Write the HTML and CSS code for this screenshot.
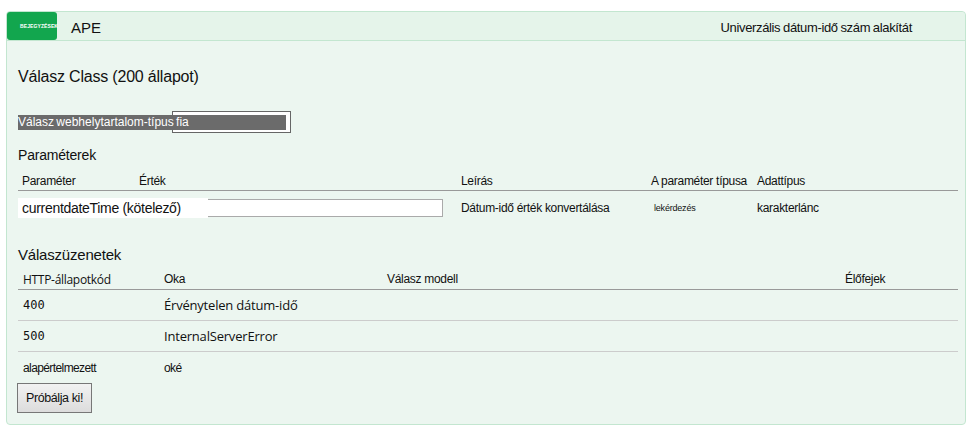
FILE: index.html
```
<!DOCTYPE html>
<html lang="hu">
<head>
<meta charset="utf-8">
<link rel="stylesheet" href="styles.css">
</head>
<body>
<div class="panel">
  <div class="head">
    <div class="badge"><span>BEJEGYZÉSEK</span></div>
    <div class="ape">APE</div>
    <div class="summary">Univerzális dátum-idő szám alakítát</div>
  </div>
  <div class="body">
    <h2 class="title">Válasz Class (200 állapot)</h2>
    <div class="select"><span class="select-label">Válasz webhelytartalom-típus fia</span></div>
    <h3 class="section">Paraméterek</h3>
    <div class="ptable">
      <div class="prow phead">
        <div>Paraméter</div>
        <div>Érték</div>
        <div>Leírás</div>
        <div>A paraméter típusa</div>
        <div>Adattípus</div>
      </div>
      <div class="prow pbody">
        <div class="pname"><span>currentdateTime (kötelező)</span></div>
        <div class="pval"><span class="input"></span></div>
        <div class="pdesc">Dátum-idő érték konvertálása</div>
        <div class="ptype">lekérdezés</div>
        <div class="pdata">karakterlánc</div>
      </div>
    </div>
    <h3 class="section resp">Válaszüzenetek</h3>
    <div class="rtable">
      <div class="rrow rhead">
        <div>HTTP-állapotkód</div>
        <div>Oka</div>
        <div>Válasz modell</div>
        <div>Élőfejek</div>
      </div>
      <div class="rrow">
        <div class="code">400</div>
        <div class="reason">Érvénytelen dátum-idő</div>
        <div></div><div></div>
      </div>
      <div class="rrow">
        <div class="code">500</div>
        <div class="reason">InternalServerError</div>
        <div></div><div></div>
      </div>
      <div class="rrow last">
        <div class="small">alapértelmezett</div>
        <div class="small">oké</div>
        <div></div><div></div>
      </div>
    </div>
    <button class="try">Próbálja ki!</button>
  </div>
</div>
</body>
</html>
```
FILE: styles.css
```
* { box-sizing: border-box; }
html, body { margin: 0; padding: 0; background: #fff; }
body {
  font-family: "Liberation Sans", Arial, sans-serif;
  color: #111;
  padding: 11px 10px 0 6px;
}
.panel {
  border: 1px solid #c3e6d0;
  border-radius: 4px;
  background: #ecf6f0;
  height: 414px;
}
.head {
  display: flex;
  align-items: center;
  height: 29px;
  background: #e5f4ea;
  border-bottom: 1px solid #c3e6d0;
  border-radius: 4px 4px 0 0;
}
.badge {
  width: 50px;
  height: 28px;
  background: #12a64e;
  border-radius: 3px;
  display: flex;
  align-items: center;
  padding-left: 13px;
  overflow: visible;
  white-space: nowrap;
}
.badge span {
  color: #fff;
  font-size: 5px;
  font-weight: bold;
  letter-spacing: 0.1px;
}
.ape {
  margin-left: 14px;
  font-size: 15px;
  padding-top: 2px;
}
.summary {
  margin-left: auto;
  margin-right: 53px;
  font-size: 13px;
  letter-spacing: -0.35px;
  word-spacing: -0.5px;
  padding-top: 2px;
}
.body {
  padding: 0 7px 0 11px;
}
.title {
  margin: 0;
  padding-top: 26px;
  font-size: 16px;
  font-weight: normal;
  letter-spacing: -0.2px;
  line-height: 20px;
}
.select {
  position: relative;
  display: block;
  width: 268px;
  margin-top: 24px;
  padding-top: 4px;
}
.select::before {
  content: "";
  position: absolute;
  left: 154px;
  top: 0;
  width: 117px;
  height: 20px;
  background: #fff;
  border: 1px solid #666;
}
.select-label {
  position: relative;
  display: block;
  width: 268px;
  height: 15px;
  line-height: 15px;
  background: #6b6b6b;
  color: #fff;
  font-size: 12px;
  letter-spacing: 0;
  word-spacing: -1px;
}
.section {
  margin: 0;
  font-weight: normal;
  font-size: 14px;
  letter-spacing: -0.2px;
  margin-top: 16px;
  line-height: 18px;
}
.ptable { margin-top: 5px; }
.prow {
  display: grid;
  grid-template-columns: 121px 322px 190px 106px 1fr;
  align-items: center;
  font-size: 12px;
  letter-spacing: -0.3px;
}
.phead {
  height: 22px;
  border-bottom: 1px solid #999;
  padding-top: 2px;
}
.phead > div:first-child { padding-left: 4px; }
.pbody {
  height: 29px;
  padding-top: 5px;
}
.pname {
  position: relative;
  z-index: 1;
  white-space: nowrap;
  overflow: visible;
}
.pname span {
  display: inline-block;
  background: #fff;
  font-size: 14px;
  letter-spacing: -0.3px;
  padding: 1px 27px 1px 4px;
  line-height: 18px;
}
.pval { display: flex; }
.input {
  display: block;
  margin-left: 3px;
  width: 301px;
  height: 18px;
  background: #fff;
  border: 1px solid #aaa;
}
.pdesc { font-size: 12px; }
.ptype { font-size: 9px; padding-left: 3px; letter-spacing: -0.2px; }
.pdata { font-size: 12px; }
.resp { margin-top: 26px; font-size: 15px; }
.rtable { margin-top: 5px; }
.rrow {
  display: grid;
  grid-template-columns: 146px 223px 458px 1fr;
  align-items: center;
  height: 31px;
  border-bottom: 1px solid #ccc;
  font-size: 13px;
}
.rrow > div:first-child { padding-left: 5px; }
.rhead {
  height: 21px;
  border-bottom: 1px solid #999;
  font-family: "Open Sans", sans-serif;
  font-size: 12px;
  letter-spacing: -0.3px;
}
.rhead > div:nth-child(n+2) { font-family: "Liberation Sans", sans-serif; }
.code { font-family: "DejaVu Sans Mono", monospace; font-size: 12px; }
.reason { font-family: "Open Sans", sans-serif; font-size: 13px; letter-spacing: -0.2px; }
.rrow.last { border-bottom: none; height: 31px; }
.small { font-size: 12px; letter-spacing: -0.6px; }
.try {
  display: block;
  margin-left: -1px;
  margin-top: 0;
  width: 75px;
  height: 30px;
  border: 1px solid #777;
  background: linear-gradient(#f2f2f2, #dcdcdc);
  font-family: "Liberation Sans", sans-serif;
  font-size: 12.5px;
  letter-spacing: -0.4px;
  color: #111;
  padding: 0;
}
```
